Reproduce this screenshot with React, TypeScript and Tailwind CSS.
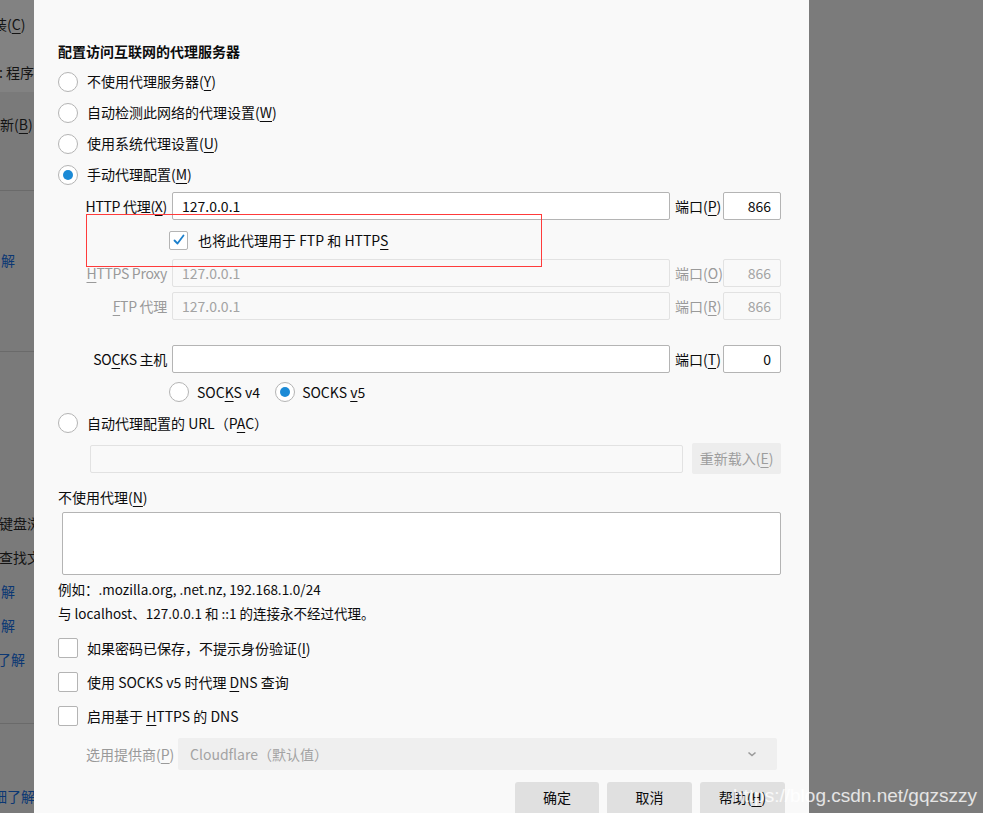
import type { ReactNode } from "react";

const font = { fontFamily: '"Noto Sans CJK SC", "Noto Sans", sans-serif' };

function Key({ children }: { children: ReactNode }) {
  return <span className="underline underline-offset-[3px] decoration-1">{children}</span>;
}

function Radio({ checked = false }: { checked?: boolean }) {
  return (
    <span className="flex h-[20px] w-[20px] shrink-0 items-center justify-center rounded-full border border-[#b4b4b4] bg-white">
      {checked && <span className="h-[10px] w-[10px] rounded-full bg-[#1b8ad6]" />}
    </span>
  );
}

function Checkbox({ checked = false, small = false }: { checked?: boolean; small?: boolean }) {
  return (
    <span
      className={`flex shrink-0 items-center justify-center rounded-[2px] border border-[#b4b4b4] bg-white ${
        small ? "h-[19px] w-[19px]" : "h-[20px] w-[20px]"
      }`}
    >
      {checked && (
        <svg width="14" height="14" viewBox="0 0 14 14" fill="none">
          <path d="M2.5 7.5 L5.5 10.5 L11.5 2.5" stroke="#1b7fcc" strokeWidth="1.8" strokeLinecap="round" strokeLinejoin="round" />
        </svg>
      )}
    </span>
  );
}

function Field({ value = "", disabled = false, right = false, className = "" }: { value?: string; disabled?: boolean; right?: boolean; className?: string }) {
  return (
    <div
      className={`flex h-[28px] items-center rounded-[2px] border text-[14px] ${
        disabled ? "border-[#e2e2e2] bg-[#f9f9f9] text-[#a3a3a3]" : "border-[#b4b4b4] bg-white text-[#0c0c0d]"
      } ${right ? "justify-end pr-[9px]" : "pl-[9px]"} ${className}`}
    >
      {value}
    </div>
  );
}

function ProxyRow({ label, port, portKey, disabled = false, value, portValue }: { label: ReactNode; port: string; portKey: string; disabled?: boolean; value: string; portValue: string }) {
  return (
    <div className="flex h-[28px] items-center">
      <div className={`flex w-[81px] shrink-0 justify-end whitespace-nowrap tracking-[-0.3px] ${disabled ? "text-[#9a9a9a]" : ""}`}>
        <span>{label}</span>
      </div>
      <Field value={value} disabled={disabled} className="ml-[5px] flex-1" />
      <div className={`ml-[5px] w-[43px] shrink-0 whitespace-nowrap ${disabled ? "text-[#9a9a9a]" : ""}`}>
        {port}(<Key>{portKey}</Key>)
      </div>
      <Field value={portValue} disabled={disabled} right className="ml-[5px] w-[58px] shrink-0" />
    </div>
  );
}

export default function App() {
  return (
    <div className="relative flex h-[813px] w-[983px] overflow-hidden text-[14px] text-[#0c0c0d]" style={font}>
      {/* dimmed page behind the dialog */}
      <div className="relative w-[34px] shrink-0 overflow-hidden bg-[#7a7a7a] text-[14px] text-[#141414]">
        <div className="h-[92px] bg-[#828282] pt-[14px]">
          <div className="ml-[-21px] whitespace-nowrap">安装(<Key>C</Key>)</div>
          <div className="ml-[-1px] mt-[27px] whitespace-nowrap">: 程序</div>
        </div>
        <div className="ml-[-14px] mt-[22px] whitespace-nowrap">更新(<Key>B</Key>)</div>
        <div className="mt-[55px] border-t border-[#6a6a6a]" />
        <div className="ml-[-13px] mt-[59px] whitespace-nowrap text-[#0b3773]">了解</div>
        <div className="mt-[80px] border-t border-[#6a6a6a]" />
        <div className="ml-[-1px] mt-[161px] whitespace-nowrap">键盘浏览</div>
        <div className="ml-[-1px] mt-[13px] whitespace-nowrap">查找文本</div>
        <div className="ml-[-13px] mt-[13px] whitespace-nowrap text-[#0b3773]">了解</div>
        <div className="ml-[-13px] mt-[13px] whitespace-nowrap text-[#0b3773]">了解</div>
        <div className="ml-[-3px] mt-[13px] whitespace-nowrap text-[#0b3773]">了解</div>
        <div className="mt-[53px] border-t border-[#6a6a6a]" />
        <div className="ml-[-7px] mt-[62px] whitespace-nowrap text-[#0b3773]">细了解</div>
      </div>

      {/* dialog */}
      <div className="w-[775px] shrink-0 bg-[#f9f9f9] pl-[24px] pr-[28px] shadow-[0_0_6px_rgba(0,0,0,0.45)]">
        <div className="mt-[39px] flex h-[24px] items-center font-bold">配置访问互联网的代理服务器</div>

        <div className="mt-[3px] flex h-[31px] items-center gap-[9px]">
          <Radio />
          <span>不使用代理服务器(<Key>Y</Key>)</span>
        </div>
        <div className="flex h-[31px] items-center gap-[9px]">
          <Radio />
          <span>自动检测此网络的代理设置(<Key>W</Key>)</span>
        </div>
        <div className="flex h-[31px] items-center gap-[9px]">
          <Radio />
          <span>使用系统代理设置(<Key>U</Key>)</span>
        </div>
        <div className="flex h-[31px] items-center gap-[9px]">
          <Radio checked />
          <span>手动代理配置(<Key>M</Key>)</span>
        </div>

        <div className="ml-[28px]">
          <div className="mt-[2px]">
            <ProxyRow label={<>HTTP 代理(<Key>X</Key>)</>} value="127.0.0.1" port="端口" portKey="P" portValue="866" />
          </div>
          <div className="mt-[6px] flex h-[28px] items-center gap-[10px] pl-[83px]">
            <Checkbox checked small />
            <span>
              也将此代理用于 FTP 和 HTTP<Key>S</Key>
            </span>
          </div>
          <div className="mt-[5px]">
            <ProxyRow disabled label={<><Key>H</Key>TTPS Proxy</>} value="127.0.0.1" port="端口" portKey="O" portValue="866" />
          </div>
          <div className="mt-[5px]">
            <ProxyRow disabled label={<><Key>F</Key>TP 代理</>} value="127.0.0.1" port="端口" portKey="R" portValue="866" />
          </div>
          <div className="mt-[25px]">
            <ProxyRow label={<>SO<Key>C</Key>KS 主机</>} value="" port="端口" portKey="T" portValue="0" />
          </div>
          <div className="mt-[5px] flex h-[28px] items-center pl-[83px]">
            <Radio />
            <span className="ml-[8px]">
              SOC<Key>K</Key>S v4
            </span>
            <span className="ml-[15px]">
              <Radio checked />
            </span>
            <span className="ml-[7px]">
              SOCKS <Key>v</Key>5
            </span>
          </div>
        </div>

        <div className="mt-[2px] flex h-[30px] items-center gap-[9px]">
          <Radio />
          <span>
            自动代理配置的 URL（P<Key>A</Key>C）
          </span>
        </div>
        <div className="ml-[32px] mt-[5px] flex h-[31px] items-center">
          <Field disabled className="flex-1" />
          <div className="ml-[9px] flex h-[31px] w-[89px] items-center justify-center rounded-[2px] bg-[#ededed] text-[#9d9d9d]">
            重新载入(<Key>E</Key>)
          </div>
        </div>

        <div className="mt-[13px] flex h-[20px] items-center">
          不使用代理(<Key>N</Key>)
        </div>
        <div className="ml-[4px] mt-[5px] h-[63px] rounded-[2px] border border-[#b4b4b4] bg-white" />

        <div className="mt-[4px] flex h-[20px] items-center text-[13.5px]">例如：.mozilla.org, .net.nz, 192.168.1.0/24</div>
        <div className="mt-[4px] flex h-[20px] items-center text-[13.5px]">与 localhost、127.0.0.1 和 ::1 的连接永不经过代理。</div>

        <div className="mt-[8px] flex h-[34px] items-center gap-[9px]">
          <Checkbox />
          <span>如果密码已保存，不提示身份验证(<Key>I</Key>)</span>
        </div>
        <div className="flex h-[34px] items-center gap-[9px]">
          <Checkbox />
          <span>
            使用 SOCKS v5 时代理 <Key>D</Key>NS 查询
          </span>
        </div>
        <div className="flex h-[34px] items-center gap-[9px]">
          <Checkbox />
          <span>
            启用基于 <Key>H</Key>TTPS 的 DNS
          </span>
        </div>

        <div className="ml-[28px] mr-[4px] mt-[5px] flex h-[32px] items-center">
          <span className="w-[92px] shrink-0 text-[#9a9a9a]">
            选用提供商(<Key>P</Key>)
          </span>
          <div className="flex h-[32px] flex-1 items-center justify-between rounded-[2px] bg-[#efefef] pl-[12px] pr-[20px] text-[#a3a3a3]">
            <span>Cloudflare（默认值）</span>
            <svg width="10" height="8" viewBox="0 0 10 8" fill="none">
              <path d="M1.5 2.5 L5 5.5 L8.5 2.5" stroke="#9a9a9a" strokeWidth="1.6" />
            </svg>
          </div>
        </div>

        <div className="mr-[-4px] mt-[12px] flex justify-end gap-[8px]">
          <div className="flex h-[40px] w-[84px] items-start justify-center rounded-t-[3px] bg-[#e0e0e0] pt-[5px]">确定</div>
          <div className="flex h-[40px] w-[85px] items-start justify-center rounded-t-[3px] bg-[#e0e0e0] pt-[5px]">取消</div>
          <div className="flex h-[40px] w-[85px] items-start justify-center rounded-t-[3px] bg-[#e0e0e0] pt-[5px]">
            帮助(<Key>H</Key>)
          </div>
        </div>
      </div>

      <div className="flex-1 bg-[#7b7b7b]" />

      {/* annotation box */}
      <div className="pointer-events-none absolute left-[86px] top-[214px] h-[53px] w-[456px] border border-[#ff3b3b]" />

      {/* watermark */}
      <div
        className="pointer-events-none absolute left-[733px] top-[782px] whitespace-nowrap text-[19px] text-white/80"
        style={{ fontFamily: '"Liberation Sans", Arial, sans-serif' }}
      >
        https://blog.csdn.net/gqzszzy
      </div>
    </div>
  );
}
